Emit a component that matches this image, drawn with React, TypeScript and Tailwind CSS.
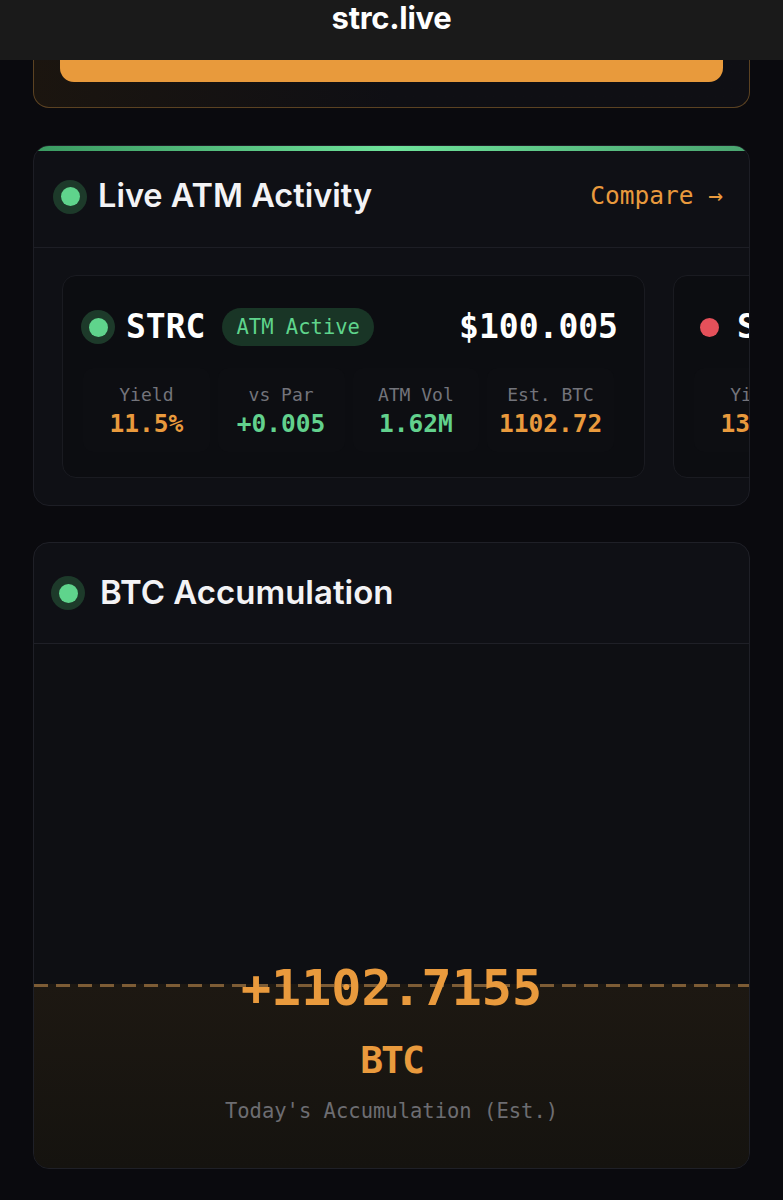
import React from "react";

const mono = "font-['DejaVu_Sans_Mono',monospace]";
const sans = "font-['Inter','Noto_Sans',sans-serif]";

const stats = [
  { label: "Yield", value: "11.5%", color: "text-[#e99a3d]" },
  { label: "vs Par", value: "+0.005", color: "text-[#62d18d]" },
  { label: "ATM Vol", value: "1.62M", color: "text-[#62d18d]" },
  { label: "Est. BTC", value: "1102.72", color: "text-[#e99a3d]" },
];

const stats2 = [
  { label: "Yield", value: "13.0%", color: "text-[#e99a3d]" },
  { label: "vs Par", value: "-0.210", color: "text-[#e5505a]" },
  { label: "ATM Vol", value: "0.00M", color: "text-[#62d18d]" },
  { label: "Est. BTC", value: "0.00", color: "text-[#e99a3d]" },
];

function LiveDot() {
  return (
    <span className="w-[34px] h-[34px] rounded-full bg-[#1d3a2a] flex items-center justify-center shrink-0">
      <span className="w-[19px] h-[19px] rounded-full bg-[#5fd48c]" />
    </span>
  );
}

function TickerCard({
  ticker,
  badge,
  price,
  dot,
  items,
}: {
  ticker: string;
  badge?: string;
  price: string;
  dot: "green" | "red";
  items: { label: string; value: string; color: string }[];
}) {
  return (
    <div className="w-[583px] h-[203px] shrink-0 rounded-[14px] bg-[#0c0d11] border border-[#1a1b21] pl-[18px] pr-[26px] pt-[31px]">
      <div className="flex items-center justify-between h-[40px]">
        <div className="flex items-center">
          {dot === "green" ? (
            <LiveDot />
          ) : (
            <span className="w-[34px] h-[34px] flex items-center justify-center shrink-0">
              <span className="w-[19px] h-[19px] rounded-full bg-[#e5505a]" />
            </span>
          )}
          <span className={`${mono} ml-[11px] text-[33px] font-bold text-white`}>
            {ticker}
          </span>
          {badge && (
            <span
              className={`${mono} ml-[17px] h-[38px] px-[14px] rounded-full bg-[#193526] text-[#5fd48c] text-[20.5px] flex items-center`}
            >
              {badge}
            </span>
          )}
        </div>
        <span className={`${mono} text-[33px] font-bold text-white`}>
          {price}
        </span>
      </div>
      <div className="grid grid-cols-4 gap-[8px] mt-[21px] pl-[2px] pr-[4px]">
        {items.map((s) => (
          <div
            key={s.label}
            className="rounded-[10px] bg-[#0d0e12] h-[84px] flex flex-col items-center justify-center"
          >
            <span className={`${mono} text-[18px] text-[#73747b] leading-[28px]`}>
              {s.label}
            </span>
            <span className={`${mono} text-[24.5px] font-bold leading-[30px] ${s.color}`}>
              {s.value}
            </span>
          </div>
        ))}
      </div>
    </div>
  );
}

export default function App() {
  return (
    <div className="w-[783px] h-[1200px] bg-[#0a0a0e] overflow-hidden">
      {/* Top bar */}
      <div className="h-[60px] bg-[#1a1a1a] flex justify-center">
        <span className={`${sans} text-[31px] font-bold text-white leading-none mt-[2px] tracking-[-0.3px]`}>
          strc.live
        </span>
      </div>

      <div className="px-[33px]">
        {/* Promo card, mostly scrolled away */}
        <div className="h-[48px] rounded-b-[16px] border border-t-0 border-[#5b4222] bg-gradient-to-r from-[#1b150f] via-[#0f0f14] to-[#0f0f14] px-[26px]">
          <div className="h-[22px] rounded-b-[14px] bg-[#e89a3c]" />
        </div>

        {/* Live ATM Activity */}
        <div className="mt-[37px] h-[361px] rounded-[16px] border border-[#1d1e25] bg-[#0f1015] overflow-hidden">
          <div className="h-[5px] bg-gradient-to-r from-[#3a9a61] via-[#6fe39b] to-[#4aa570]" />
          <div className="h-[97px] flex items-center justify-between pl-[19px] pr-[26px] pb-[5px] border-b border-[#1d1e25]">
            <div className="flex items-center">
              <LiveDot />
              <span className={`${sans} ml-[11px] text-[32.5px] font-semibold text-[#f3f3f5]`}>
                Live ATM Activity
              </span>
            </div>
            <span className={`${mono} text-[24.5px] text-[#e99a3d]`}>
              Compare →
            </span>
          </div>
          <div className="flex gap-[28px] pl-[28px] pt-[27px] overflow-hidden">
            <TickerCard ticker="STRC" badge="ATM Active" price="$100.005" dot="green" items={stats} />
            <TickerCard ticker="STRF" price="$99.790" dot="red" items={stats2} />
          </div>
        </div>

        {/* BTC Accumulation */}
        <div className="mt-[36px] h-[627px] rounded-[16px] border border-[#1f2027] bg-[#0f1015] overflow-hidden flex flex-col">
          <div className="h-[101px] shrink-0 flex items-center pl-[17px] border-b border-[#1f2027]">
            <LiveDot />
            <span className={`${sans} ml-[15px] text-[33px] font-semibold text-[#f3f3f5]`}>
              BTC Accumulation
            </span>
          </div>
          <div className="h-[340px] shrink-0 bg-[#0e0f13]" />
          <div className="flex-1 bg-gradient-to-b from-[#1d1812] to-[#15130f] flex flex-col items-center">
            <div className="w-full h-[3px] shrink-0 bg-[repeating-linear-gradient(90deg,#7d5c35_0px,#7d5c35_14px,transparent_14px,transparent_22px)]" />
            <span className={`${mono} -mt-[27px] text-[50px] font-bold text-[#e99a3d] leading-[56px]`}>
              +1102.7155
            </span>
            <span className={`${mono} mt-[22px] text-[38px] font-bold text-[#e99a3d] leading-[44px] tracking-[-2px]`}>
              BTC
            </span>
            <span className={`${mono} mt-[14px] text-[20.5px] text-[#6d6d72]`}>
              Today's Accumulation (Est.)
            </span>
          </div>
        </div>
      </div>
    </div>
  );
}
